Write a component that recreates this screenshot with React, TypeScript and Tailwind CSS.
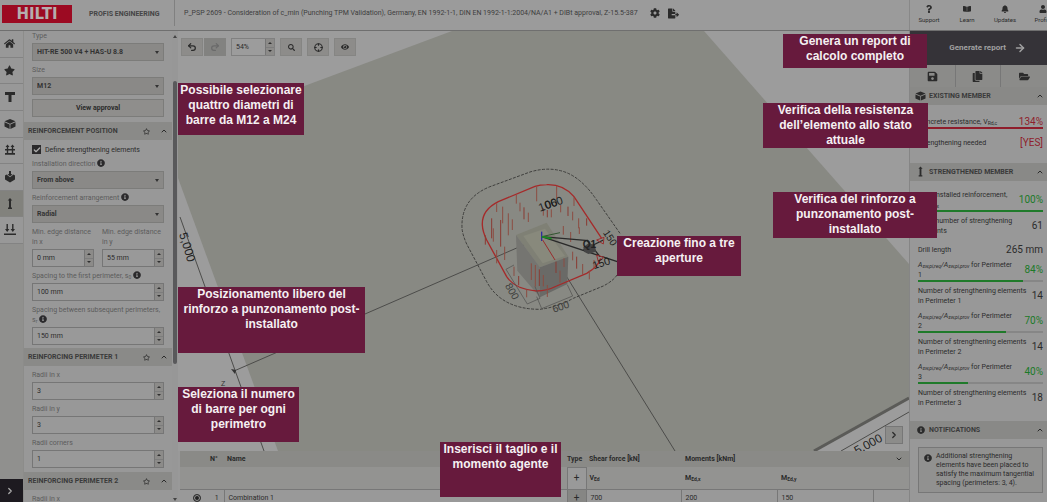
import React from "react";
import {
  FaHome, FaStar, FaCog, FaSave, FaCopy, FaFolderOpen, FaBell, FaUser, FaQuestion,
  FaInfoCircle, FaSearch, FaEye, FaRegStar, FaBookOpen, FaFileExport,
} from "react-icons/fa";
import { ChevronUp, ChevronDown, ChevronRight, ArrowRight, Undo2, Redo2, Crosshair, Check } from "lucide-react";

const Info = () => <FaInfoCircle className="inline size-2 align-[-1px] text-[#2b2a2c]" />;

const Field = ({ label, info, id, children }: { label: React.ReactNode; info?: boolean; id: string; children: React.ReactNode }) => (
  <div className="min-w-0 flex-1">
    <label htmlFor={id} className="block pt-1 pb-[2px] leading-[10px] text-[#5c5c5c]">
      {label} {info && <Info />}
    </label>
    {children}
  </div>
);

const Select = ({ id, value }: { id: string; value: string }) => (
  <div className="relative">
    <select id={id} className="block h-[18px] w-full appearance-none border border-[#7c7c7a] bg-[#8a8987] px-1 text-[7px] font-bold text-[#333]">
      <option>{value}</option>
    </select>
    <span className="pointer-events-none absolute top-2 right-[5px] border-x-2 border-t-[3px] border-x-transparent border-t-[#333]" />
  </div>
);

const Steps = ({ name }: { name: string }) => (
  <span className="flex w-[9px] shrink-0 flex-col border-l border-[#767676] bg-[#8c8b89]">
    <button aria-label={`Increase ${name}`} className="flex flex-1 items-center justify-center border-b border-[#7d7d7d]">
      <span className="border-x-2 border-b-2 border-x-transparent border-b-[#2f2f2f]" />
    </button>
    <button aria-label={`Decrease ${name}`} className="flex flex-1 items-center justify-center">
      <span className="border-x-2 border-t-2 border-x-transparent border-t-[#2f2f2f]" />
    </button>
  </span>
);

const NumberBox = ({ id, value }: { id: string; value: string }) => (
  <div className="flex h-[18px] border border-[#767676] bg-[#999]">
    <input id={id} defaultValue={value} className="w-0 min-w-0 flex-1 bg-transparent px-1 text-[7px] text-[#2c2c2c]" />
    <Steps name={id} />
  </div>
);

const SectionHead = ({ title }: { title: string }) => (
  <div className="flex h-[18px] items-center bg-[#8a8a88] px-1">
    <h2 className="flex-1 font-bold text-[#3a3a3a]">{title}</h2>
    <button aria-label={`Favourite ${title}`}><FaRegStar className="size-[7px]" /></button>
    <button aria-label={`Collapse ${title}`} className="ml-[10px]"><ChevronUp className="size-2" strokeWidth={3} /></button>
  </div>
);

const Anchor = () => (
  <svg viewBox="0 0 12 12" className="size-3" fill="currentColor">
    <path d="M6 0 8.300 2.500H7V9.500H8V11H4V9.500H5V2.500H3.700z" />
  </svg>
);
const DownLoads = () => (
  <svg viewBox="0 0 12 12" className="size-3" fill="currentColor">
    <path d="M2.500 0h1.400v5h1.500L3.200 8 1 5h1.500zM8.100 0h1.400v5H11L8.800 8 6.600 5h1.500zM0 9.500h12V11H0z" />
  </svg>
);
const Mesh = () => (
  <svg viewBox="0 0 12 12" className="size-3" fill="currentColor">
    <path d="M1.500 3 3.500 .5 5.500 3zM6.500 3 8.500 .5 10.500 3zM2.800 3h1.400v7.500H2.800zM7.800 3h1.400v7.500H7.800zM1 5h10v1.500H1zM1 9h10v1.800H1z" />
  </svg>
);
const Tee = () => (
  <svg viewBox="0 0 12 12" className="size-3" fill="currentColor"><path d="M1 1h10v3H7.500v7h-3V4H1z" /></svg>
);
const Block = () => (
  <svg viewBox="0 0 12 12" className="size-3" fill="currentColor">
    <path d="M6 1 11.500 3.300 6 5.800 .5 3.300zM.5 4.300 5.600 6.600V11L.5 8.600zM11.500 4.300 6.400 6.600V11l5.100-2.400z" />
  </svg>
);
const Plate = () => (
  <svg viewBox="0 0 12 12" className="size-3" fill="currentColor">
    <path d="M5 0h2v3l1.500 .5L6 5.300 3.500 3.500 5 3zM1 4.500l1.500-1L6 6.200l3.500-2.700 1.500 1V8.500L6 11.500 1 8.500z" />
  </svg>
);

const rail = [
  { name: "Home", icon: <FaHome className="size-[11px]" /> },
  { name: "Favourites", icon: <FaStar className="size-[11px]" /> },
  { name: "Profile type", icon: <Tee /> },
  { name: "Base material", icon: <Block /> },
  { name: "Reinforcement", icon: <Mesh /> },
  { name: "Plate", icon: <Plate /> },
  { name: "Anchors", icon: <Anchor /> },
  { name: "Loads", icon: <DownLoads /> },
];

function Header() {
  return (
    <header className="flex h-[31px] shrink-0 border-b border-[#6f6f6f] bg-[#9b9b9b]">
      <div className="flex w-[174px] shrink-0 items-center pb-[2px] pl-[2px]">
        <div className="flex h-[18px] w-[70px] items-center justify-center bg-[#9c0a22] font-['DejaVu_Sans',sans-serif] text-[15px] font-bold text-[#b5adad]">HILTI</div>
        <span className="ml-[17px] font-bold text-[#454545] whitespace-nowrap">PROFIS ENGINEERING</span>
      </div>
      <div className="mb-1 flex min-w-0 flex-1 items-center border-l border-[#808080] pl-[9px]">
        <span className="truncate text-[7px] text-[#3d3d3d]">
          P_PSP 2609 - Consideration of c_min (Punching TPM Validation), Germany, EN 1992-1-1, DIN EN 1992-1-1:2004/NA/A1 + DIBt approval, Z-15.5-387
        </span>
        <button aria-label="Settings" className="ml-3"><FaCog className="size-[10px]" /></button>
        <button aria-label="Export file" className="ml-2"><FaFileExport className="size-[11px]" /></button>
      </div>
      <nav className="flex w-[138px] shrink-0 overflow-hidden border-l border-[#888]">
        {[
          ["Support", <FaQuestion className="size-2" />],
          ["Learn", <FaBookOpen className="size-2" />],
          ["Updates", <FaBell className="size-2" />],
          ["Profile", <FaUser className="size-2" />],
        ].map(([t, icon]) => (
          <a key={t as string} href="#" className="flex w-[38px] shrink-0 flex-col items-center gap-[3px] pt-[5px] text-[6px] leading-2">
            {icon}
            {t}
          </a>
        ))}
      </nav>
    </header>
  );
}

function Settings() {
  return (
    <aside className="flex w-[154px] shrink-0 overflow-hidden bg-[#989898]">
      <div className="w-[148px] shrink-0">
        <div className="-mt-1 px-2">
          <Field id="type" label="Type"><Select id="type" value="HIT-RE 500 V4 + HAS-U 8.8" /></Field>
          <Field id="size" label="Size"><Select id="size" value="M12" /></Field>
          <button className="mt-1 mb-[5px] block h-[18px] w-full border border-[#7c7c7a] bg-[#8f8e8c] font-bold">View approval</button>
        </div>
        <SectionHead title="REINFORCEMENT POSITION" />
        <div className="px-2 pt-1 pb-[3px]">
          <label className="flex h-[11px] items-center gap-1">
            <input type="checkbox" defaultChecked className="peer sr-only" />
            <span className="flex size-[9px] items-center justify-center bg-[#2b2a2c] text-[#aaa]"><Check className="size-2" strokeWidth={4} /></span>
            Define strengthening elements
          </label>
          <Field id="direction" label="Installation direction" info><Select id="direction" value="From above" /></Field>
          <Field id="arrangement" label="Reinforcement arrangement" info><Select id="arrangement" value="Radial" /></Field>
          <div className="flex gap-2">
            <Field id="edge-x" label={<>Min. edge distance<br />in x</>}><NumberBox id="edge-x" value="0 mm" /></Field>
            <Field id="edge-y" label={<>Min. edge distance<br />in y</>}><NumberBox id="edge-y" value="55 mm" /></Field>
          </div>
          <Field id="first" label={<>Spacing to the first perimeter, s<sub className="text-[5px]">0</sub></>} info><NumberBox id="first" value="100 mm" /></Field>
          <Field id="next" label={<>Spacing between subsequent perimeters,<br />s<sub className="text-[5px]">r</sub></>} info><NumberBox id="next" value="150 mm" /></Field>
        </div>
        <SectionHead title="REINFORCING PERIMETER 1" />
        <div className="px-2 pb-1">
          <Field id="radii-x" label="Radii in x"><NumberBox id="radii-x" value="3" /></Field>
          <Field id="radii-y" label="Radii in y"><NumberBox id="radii-y" value="3" /></Field>
          <Field id="corners" label="Radii corners"><NumberBox id="corners" value="1" /></Field>
        </div>
        <SectionHead title="REINFORCING PERIMETER 2" />
        <div className="px-2"><Field id="radii-x2" label="Radii in x"><NumberBox id="radii-x2" value="3" /></Field></div>
      </div>
      <div className="flex flex-1 flex-col items-center bg-[#979797] pt-1">
        <span className="border-x-2 border-b-[3px] border-x-transparent border-b-[#444]" />
        <span className="mt-[43px] h-[283px] w-1 rounded-sm bg-[#59595b]" />
        <span className="mt-auto mb-px border-x-2 border-t-[3px] border-x-transparent border-t-[#444]" />
      </div>
    </aside>
  );
}

const bars = [
  [155, 205, 60], [170, 160, 26], [188, 170, 50], [205, 190, 66], [182, 210, 80], [217, 208, 32], [229, 135, 26], [240, 158, 26],
  [252, 172, 36], [265, 188, 28], [290, 110, 44], [310, 175, 22], [322, 180, 22], [334, 178, 24], [350, 107, 38], [362, 165, 22], [384, 170, 28],
  [402, 142, 26], [398, 185, 26], [416, 205, 30], [440, 205, 22], [370, 228, 26], [392, 246, 30], [418, 232, 20], [136, 256, 28], [170, 300, 40],
  [160, 235, 40], [194, 290, 40], [236, 378, 28], [222, 350, 28], [274, 340, 50], [286, 345, 65], [298, 358, 50], [310, 375, 34], [260, 418, 24],
  [322, 405, 36], [348, 335, 34], [360, 362, 36], [372, 325, 26], [398, 305, 26], [410, 320, 36], [428, 342, 32], [448, 362, 26], [462, 330, 24],
];

function Scene() {
  return (
    <svg viewBox="178 31 731 420" preserveAspectRatio="xMidYMid slice" className="size-full" role="img" aria-label="Slab model" fontFamily="'Liberation Sans', sans-serif">
      <path d="M178 133 452 31H704L909 264V398L814 451H278L178 178z" fill="#888983" />
      <path d="M909 398 814 451" stroke="#5b5b58" strokeWidth="3" />
      <path d="M909 412 841 451M180 217 264 451M234 371 542 237 675 451" stroke="#4c4c4a" fill="none" />
      <text transform="translate(857 455) rotate(-29)" fontSize="12" fill="#222">5,000</text>
      <text transform="translate(179 234) rotate(73)" fontSize="12" fill="#222">5,000</text>
      <text x="221" y="386" fontSize="7" fill="#333">Z</text>
      <path d="m231 369 5 1-1 4z" fill="#333" />
      <g transform="translate(440 150) scale(.3333)">
        <path d="M228 255 320 218 385 320 300 352z" fill="#7f8075" />
        <path d="M228 255 300 352V442L232 362z" fill="#757571" />
        <path d="M300 352 385 320 382 402 300 442z" fill="#6a6a67" />
        <path d="M250 258 315 236 375 318 308 340z" fill="#88897c" />
        <path d="M540 250 470 150Q428 88 380 68 330 48 270 66L150 110Q62 145 66 235 68 255 80 282L140 395Q185 478 300 478 350 472 400 445L490 408Q525 390 535 368" fill="none" stroke="#3e3e3c" strokeWidth="3" strokeDasharray="9 4" />
        <path d="M485 265 402 140Q370 102 320 104 300 104 285 109L175 155Q125 180 127 225 128 245 140 270L200 380Q225 418 290 423 320 423 350 408L440 370Q475 350 482 325" fill="none" stroke="#a52a2a" strokeWidth="4" />
        {bars.map(([x, y, h], i) => <path key={i} d={`M${x} ${y}v${h}`} stroke={i % 4 === 0 ? "#8a3a32" : "#8c4c42"} strokeWidth="3" />)}
        <path d="M198 358 222 345M198 358 262 462 300 445 285 410M305 476 290 440M305 476 398 438 382 404" stroke="#4d4d4b" strokeWidth="2" fill="none" />
        <path d="M305 260 445 272M305 260 532 335M440 270 480 320M430 300 490 270" stroke="#292929" strokeWidth="4" />
        <path d="M305 260 360 248" stroke="#31552f" strokeWidth="3" />
        <path d="M305 245v28" stroke="#2c2ca0" strokeWidth="4" />
        <path d="M305 260 335 266" stroke="#188a20" strokeWidth="5" />
        <path d="M308 270 345 330" stroke="#9a2c2c" strokeWidth="3" />
        <path d="M430 292 445 280 465 285 468 305 445 312 432 305z" fill="#444" />
        <path d="M470 270 492 262 490 282zM470 315 492 322 475 335z" fill="none" stroke="#9a3030" strokeWidth="3" />
        <text transform="translate(300 185) rotate(-19)" fontSize="34" fill="#1c1c1c">1060</text>
        <text transform="translate(319 178) rotate(-19)" fontSize="34" fill="#1c1c1c">00</text>
        <text transform="translate(428 295)" fontSize="30" fontWeight="bold" fill="#222">Q1</text>
        <text transform="translate(488 248) rotate(57)" fontSize="30" fill="#1c1c1c">150</text>
        <text transform="translate(462 358) rotate(-18)" fontSize="32" fill="#1c1c1c">150</text>
        <text transform="translate(194 407) rotate(60)" fontSize="31" fill="#3c3c3a">800</text>
        <text transform="translate(341 488) rotate(-18)" fontSize="31" fill="#3c3c3a">600</text>
      </g>
    </svg>
  );
}

const toolBtn = "flex h-[18px] w-[22px] items-center justify-center border border-[#858583] bg-[#8d8c8a]";

function Note({ place, children }: { place: string; children: React.ReactNode }) {
  return <p className={`absolute bg-[#671a3d] text-center font-['Liberation_Sans',sans-serif] text-[12px] leading-[15px] font-bold whitespace-nowrap text-[#f5f0f2] ${place}`}>{children}</p>;
}

function Workspace() {
  return (
    <main className="relative flex min-w-0 flex-1 flex-col">
      <div className="relative min-h-0 flex-1 bg-[#9c9c9c]">
        <div className="absolute inset-0"><Scene /></div>
        <div className="relative flex gap-[5px] pt-[7px] pl-[3px]">
          <div className="flex gap-px">
            <button aria-label="Undo" className={toolBtn}><Undo2 className="size-[10px]" strokeWidth={3} /></button>
            <button aria-label="Redo" className="flex h-[18px] w-[22px] items-center justify-center bg-[#828280] text-[#6a6a6a]"><Redo2 className="size-[10px]" strokeWidth={3} /></button>
          </div>
          <div className="flex h-[18px] w-11 border border-[#808080] bg-[#9c9c9c]">
            <input aria-label="Zoom" defaultValue="54%" className="w-0 flex-1 bg-transparent px-1 text-[7px]" />
            <Steps name="zoom" />
          </div>
          <button aria-label="Search" className={toolBtn}><FaSearch className="size-[7px]" /></button>
          <button aria-label="Centre" className={toolBtn}><Crosshair className="size-[9px]" strokeWidth={3} /></button>
          <button aria-label="Visibility" className={toolBtn}><FaEye className="size-2" /></button>
        </div>
        <button aria-label="Next" className="absolute right-[6px] bottom-[7px] flex size-[18px] items-center justify-center border border-[#777] bg-[#8c8c8a]">
          <ChevronRight className="size-[10px]" strokeWidth={3} />
        </button>
      </div>
      <div className="h-[51px] shrink-0 overflow-hidden bg-[#999] pl-[2px]">
        <table className="w-full table-fixed border-collapse text-left">
          <colgroup>
            <col className="w-[30px]" /><col className="w-[14px]" /><col /><col className="w-[19px]" />
            <col className="w-[95px]" /><col className="w-24" /><col className="w-24" /><col className="w-9" />
          </colgroup>
          <thead>
            <tr className="h-4 bg-[#8a8a87]">
              <th /><th>N°</th><th className="pl-[3px]">Name</th><th className="whitespace-nowrap">Type</th><th className="pl-[3px]">Shear force [kN]</th>
              <th className="pl-1">Moments [kNm]</th><th />
              <th><button aria-label="Collapse table" className="ml-[22px] block"><ChevronDown className="size-2" strokeWidth={3} /></button></th>
            </tr>
            <tr className="h-[22px] border-b border-[#777] bg-[#939391]">
              <th /><th /><th />
              <th className="border border-[#777] bg-[#999] text-center text-[10px] font-normal">+</th>
              <th className="pl-[3px]">V<sub className="text-[5px]">Ed</sub></th>
              <th className="pl-1">M<sub className="text-[5px]">Ed,x</sub></th>
              <th className="pl-1">M<sub className="text-[5px]">Ed,y</sub></th><th />
            </tr>
          </thead>
          <tbody>
            <tr className="h-[18px]">
              <td><input type="radio" name="combo" defaultChecked aria-label="Combination 1" className="mx-auto ml-[13px] block size-2 appearance-none rounded-full border border-[#333] bg-[#222] ring-1 ring-[#999] ring-inset" /></td>
              <td className="text-center">1</td>
              <td className="border-l border-[#777] pl-1">Combination 1</td>
              <td className="border border-[#777] bg-[#868684] text-center text-[10px]">+</td>
              <td className="pl-1">700</td>
              <td className="border-l border-[#777] pl-1">200</td>
              <td className="border-x border-[#777] pl-1">150</td><td />
            </tr>
          </tbody>
        </table>
      </div>
      <Note place="top-[52px] left-0 h-[52px] w-[126px]">Possibile selezionare<br />quattro diametri di<br />barre da M12 a M24</Note>
      <Note place="top-64 left-0 h-[66px] w-[187px]">Posizionamento libero del<br />rinforzo a punzonamento post-<br />installato</Note>
      <Note place="top-[356px] left-0 h-[55px] w-[121px]">Seleziona il numero<br />di barre per ogni<br />perimetro</Note>
      <Note place="bottom-[5px] left-[262px] h-[55px] w-[121px]">Inserisci il taglio e il<br />momento agente</Note>
      <Note place="top-[205px] left-[439px] h-10 w-[124px]">Creazione fino a tre<br />aperture</Note>
    </main>
  );
}

const ResultHead = ({ icon, title }: { icon: React.ReactNode; title: string }) => (
  <div className="flex h-[18px] items-center gap-[3px] bg-[#898987] pr-[3px] pl-[5px]">
    <span className="flex w-[11px] justify-center">{icon}</span>
    <h2 className="flex-1 font-bold text-[#3a3a3a]">{title}</h2>
    <button aria-label={`Collapse ${title}`}><ChevronUp className="size-2" strokeWidth={3} /></button>
  </div>
);

const Metric = ({ label, value, pct, tone }: { label: React.ReactNode; value: string; pct: number; tone: "red" | "green" }) => (
  <div>
    <div className="flex items-center justify-between leading-[10px]">
      <span>{label}</span>
      <span className={tone === "red" ? "text-[10px] text-[#8f1d2b]" : "text-[10px] text-[#1b7a28]"}>{value}</span>
    </div>
    <div className="h-[2px] bg-[#868686]">
      <div className={tone === "red" ? "h-[2px] bg-[#8f1d2b]" : "h-[2px] bg-[#1f7a2a]"} style={{ width: `${pct}%` }} />
    </div>
  </div>
);

const Count = ({ label, value }: { label: React.ReactNode; value: string }) => (
  <div className="flex items-center justify-between pt-1 pb-[5px] leading-[10px]">
    <span>{label}</span>
    <span className="text-[10px] whitespace-nowrap">{value}</span>
  </div>
);

const Ratio = ({ n }: { n: number }) => (
  <><i>A<sub className="text-[5px]">sw,pi,req</sub>/A<sub className="text-[5px]">sw,pi,prov</sub></i> for Perimeter<br />{n}</>
);

function Results() {
  return (
    <aside className="w-[138px] shrink-0 overflow-hidden border-l border-[#858585] bg-[#989898]">
      <button className="flex h-[34px] w-full items-center justify-end gap-2 bg-[#353338] pr-[21px] text-[8px] font-bold text-[#a0a0a0]">
        Generate report <ArrowRight className="size-3" strokeWidth={3} />
      </button>
      <div className="grid h-[22px] grid-cols-3 divide-x divide-[#777] bg-[#8b8b89]">
        <button aria-label="Save" className="flex items-center justify-center"><FaSave className="size-[11px]" /></button>
        <button aria-label="Duplicate" className="flex items-center justify-center"><FaCopy className="size-[11px]" /></button>
        <button aria-label="Open" className="flex items-center justify-center"><FaFolderOpen className="size-[11px]" /></button>
      </div>
      <ResultHead icon={<Block />} title="EXISTING MEMBER" />
      <div className="pt-3 pr-1 pb-[11px] pl-2">
        <Metric label={<>Concrete resistance, V<sub className="text-[5px]">Rd,c</sub></>} value="134%" pct={100} tone="red" />
        <div className="flex items-center justify-between pt-[9px] pb-1 leading-[10px]">
          <span>Strengthening needed</span><span className="text-[10px] text-[#8f1d2b]">[YES]</span>
        </div>
      </div>
      <ResultHead icon={<Anchor />} title="STRENGTHENED MEMBER" />
      <div className="pt-[9px] pr-1 pb-2 pl-2">
        <Metric label={<>Post-installed reinforcement,<br />V<sub className="text-[5px]">Rd,max</sub></>} value="100%" pct={100} tone="green" />
        <Count label={<>Total number of strengthening<br />elements</>} value="61" />
        <Count label="Drill length" value="265 mm" />
        <Metric label={<Ratio n={1} />} value="84%" pct={84} tone="green" />
        <Count label={<>Number of strengthening elements<br />in Perimeter 1</>} value="14" />
        <Metric label={<Ratio n={2} />} value="70%" pct={70} tone="green" />
        <Count label={<>Number of strengthening elements<br />in Perimeter 2</>} value="14" />
        <Metric label={<Ratio n={3} />} value="40%" pct={40} tone="green" />
        <Count label={<>Number of strengthening elements<br />in Perimeter 3</>} value="18" />
      </div>
      <ResultHead icon={<FaInfoCircle className="size-2" />} title="NOTIFICATIONS" />
      <div className="mt-2 mr-1 ml-2 flex gap-1 border border-[#777] bg-[#919190] py-1 pl-[5px] leading-[9px]">
        <FaInfoCircle className="mt-[2px] size-2 shrink-0" />
        <p>Additional strengthening<br />elements have been placed to<br />satisfy the maximum tangential<br />spacing (perimeters: 3, 4).</p>
      </div>
    </aside>
  );
}

export default function App() {
  return (
    <div className="relative flex h-screen flex-col overflow-hidden bg-[#999] font-[Roboto,'Liberation_Sans',sans-serif] text-[7px] leading-[10px] text-[#2b2b2b]">
      <Header />
      <div className="flex min-h-0 flex-1">
        <nav className="flex w-6 shrink-0 flex-col border-r border-[#8c8c8a] bg-[#90908e]">
          <div className="grid h-[213px] grid-rows-8">
            {rail.map((r) => (
              <button key={r.name} aria-label={r.name} className={r.name === "Anchors" ? "flex items-center justify-center border-b border-[#838381] bg-[#82827d] pr-1" : "flex items-center justify-center border-b border-[#838383] bg-[#989898] pr-1"}>
                {r.icon}
              </button>
            ))}
          </div>
          <button aria-label="Expand" className="mt-auto flex h-[23px] items-center justify-center bg-[#1d1a20] pr-1 text-[#aaa]"><ChevronRight className="size-[10px]" strokeWidth={3} /></button>
        </nav>
        <Settings />
        <Workspace />
        <Results />
      </div>
      <Note place="top-[34px] right-[120px] h-[34px] w-36">Genera un report di<br />calcolo completo</Note>
      <Note place="top-[103px] right-[119px] h-[45px] w-[165px]">Verifica della resistenza<br />dell’elemento allo stato<br />attuale</Note>
      <Note place="top-48 right-[110px] h-[46px] w-[164px]">Verifica del rinforzo a<br />punzonamento post-<br />installato</Note>
    </div>
  );
}
